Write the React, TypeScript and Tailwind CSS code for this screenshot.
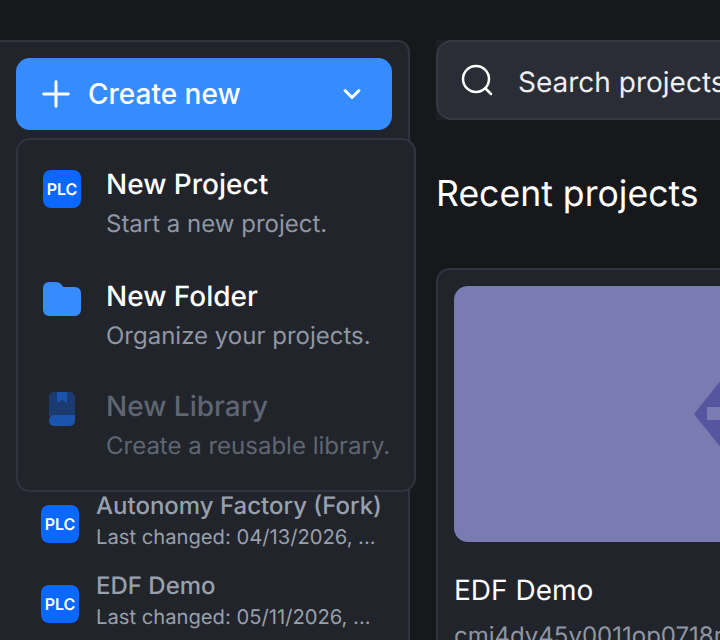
import { ChevronDown, Plus } from "lucide-react";

function PlcBadge() {
  return (
    <div className="flex h-[38px] w-[38px] shrink-0 items-center justify-center rounded-[8px] bg-[#0b68ff] text-[16px] font-semibold text-white">
      PLC
    </div>
  );
}

function FolderIcon() {
  return (
    <svg width="38" height="34" viewBox="0 0 38 34" className="block">
      <path
        d="M0 6a6 6 0 0 1 6-6h7c2 0 3.500.8 5 2.300L20.500 5H32a6 6 0 0 1 6 6v17a6 6 0 0 1-6 6H6a6 6 0 0 1-6-6z"
        fill="#368cff"
      />
    </svg>
  );
}

function LibraryIcon() {
  return (
    <svg width="26" height="34" viewBox="0 0 26 34" className="block">
      <path d="M5 0h16a5 5 0 0 1 5 5v19H0V5a5 5 0 0 1 5-5z" fill="#1b3a70" />
      <path d="M8 0h10v11l-5-3-5 3z" fill="#1c53ac" />
      <path d="M0 28a5 5 0 0 1 5-5h21v6a5 5 0 0 1-5 5H5a5 5 0 0 1-5-5z" fill="#1c53ac" />
    </svg>
  );
}

function SearchGlyph() {
  return (
    <svg width="32" height="32" viewBox="0 0 32 32" fill="none" stroke="currentColor" strokeWidth="2.500" strokeLinecap="round" className="block shrink-0">
      <circle cx="15" cy="15" r="13" />
      <path d="M25 25l5 5" />
    </svg>
  );
}

function MenuItem({ icon, title, desc, disabled }: { icon: React.ReactNode; title: string; desc: string; disabled?: boolean }) {
  return (
    <div className="flex items-start gap-[25px] pl-[25px]">
      <div className="flex w-[38px] shrink-0 justify-center pt-[6px]">{icon}</div>
      <div>
        <p className={`text-[28px] leading-[40px] font-medium ${disabled ? "text-[#5f6671]" : "text-white"}`}>{title}</p>
        <p className={`text-[24px] leading-[40px] ${disabled ? "text-[#5f6671]" : "text-[#8f97a3]"}`}>{desc}</p>
      </div>
    </div>
  );
}

function ProjectRow({ name, changed }: { name: string; changed: string }) {
  return (
    <div className="flex h-[80px] items-center gap-[17px] pl-[51px]">
      <PlcBadge />
      <div className="min-w-0 pb-[6px]">
        <p className="text-[24px] leading-[32px] font-medium whitespace-nowrap text-[#98a0ac]">{name}</p>
        <p className="text-[20.2px] leading-[30px] whitespace-nowrap text-[#98a0ac]">{changed}</p>
      </div>
    </div>
  );
}

export default function App() {
  return (
    <div className="flex h-[640px] w-[720px] overflow-hidden bg-[#17181c] font-['Inter',sans-serif] [text-rendering:geometricPrecision] antialiased">
      <aside className="relative mt-[40px] ml-[-12px] h-[640px] w-[422px] shrink-0 rounded-[12px] border-2 border-[#30343d] bg-[#22242b]">
        <button className="mt-[16px] ml-[26px] flex h-[72px] w-[376px] items-center rounded-[14px] bg-[#368cff] pr-[26px] pl-[19px] text-white">
          <Plus size={42} strokeWidth={1.7} />
          <span className="ml-[11px] flex-1 text-left text-[28px] font-medium">Create new</span>
          <ChevronDown size={28} strokeWidth={2.5} />
        </button>

        <div className="mt-[354px] flex flex-col">
          <ProjectRow name="Autonomy Factory (Fork)" changed="Last changed: 04/13/2026, ..." />
          <ProjectRow name="EDF Demo" changed="Last changed: 05/11/2026, ..." />
        </div>

        <div className="absolute top-[96px] left-[26px] flex h-[354px] w-[400px] flex-col rounded-[14px] border-2 border-[#30343d] bg-[#22242b] pt-[24px]">
          <MenuItem icon={<PlcBadge />} title="New Project" desc="Start a new project." />
          <div className="mt-[32px]">
            <MenuItem icon={<FolderIcon />} title="New Folder" desc="Organize your projects." />
          </div>
          <div className="mt-[30px]">
            <MenuItem icon={<LibraryIcon />} title="New Library" desc="Create a reusable library." disabled />
          </div>
        </div>
      </aside>

      <main className="ml-[26px] min-w-0 flex-1 pt-[40px]">
        <div className="w-[400px] bg-[#1e2026]">
          <div className="flex h-[80px] items-center rounded-[16px] border-2 border-[#353944] bg-[#2a2d36] pl-[23px] text-white">
            <SearchGlyph />
            <span className="ml-[25px] pt-[4px] text-[28px] whitespace-nowrap text-[#eceef1]">Search projects</span>
          </div>
        </div>

        <h1 className="mt-[50px] text-[35.6px] leading-[48px] whitespace-nowrap text-white">Recent projects</h1>

        <section className="mt-[50px] h-[500px] w-[400px] rounded-[14px] border-2 border-[#30343d] bg-[#22242b] pt-[16px] pl-[16px]">
          <div className="relative h-[256px] w-[400px] overflow-hidden rounded-[14px] bg-[#7a7bb1]">
            <svg width="96" height="120" viewBox="0 0 96 120" className="absolute top-[68px] left-[240px]">
              <path d="M48 0L96 60L48 120L0 60z" fill="#5656a0" />
              <path d="M13 53h30v13H13z" fill="#7a7bb1" />
            </svg>
          </div>
          <p className="mt-[28px] text-[28px] leading-[40px] whitespace-nowrap text-white">EDF Demo</p>
          <p className="mt-[8px] text-[24px] leading-[36px] whitespace-nowrap text-[#8f97a3]">cmj4dv45v0011op0718r</p>
        </section>
      </main>
    </div>
  );
}
